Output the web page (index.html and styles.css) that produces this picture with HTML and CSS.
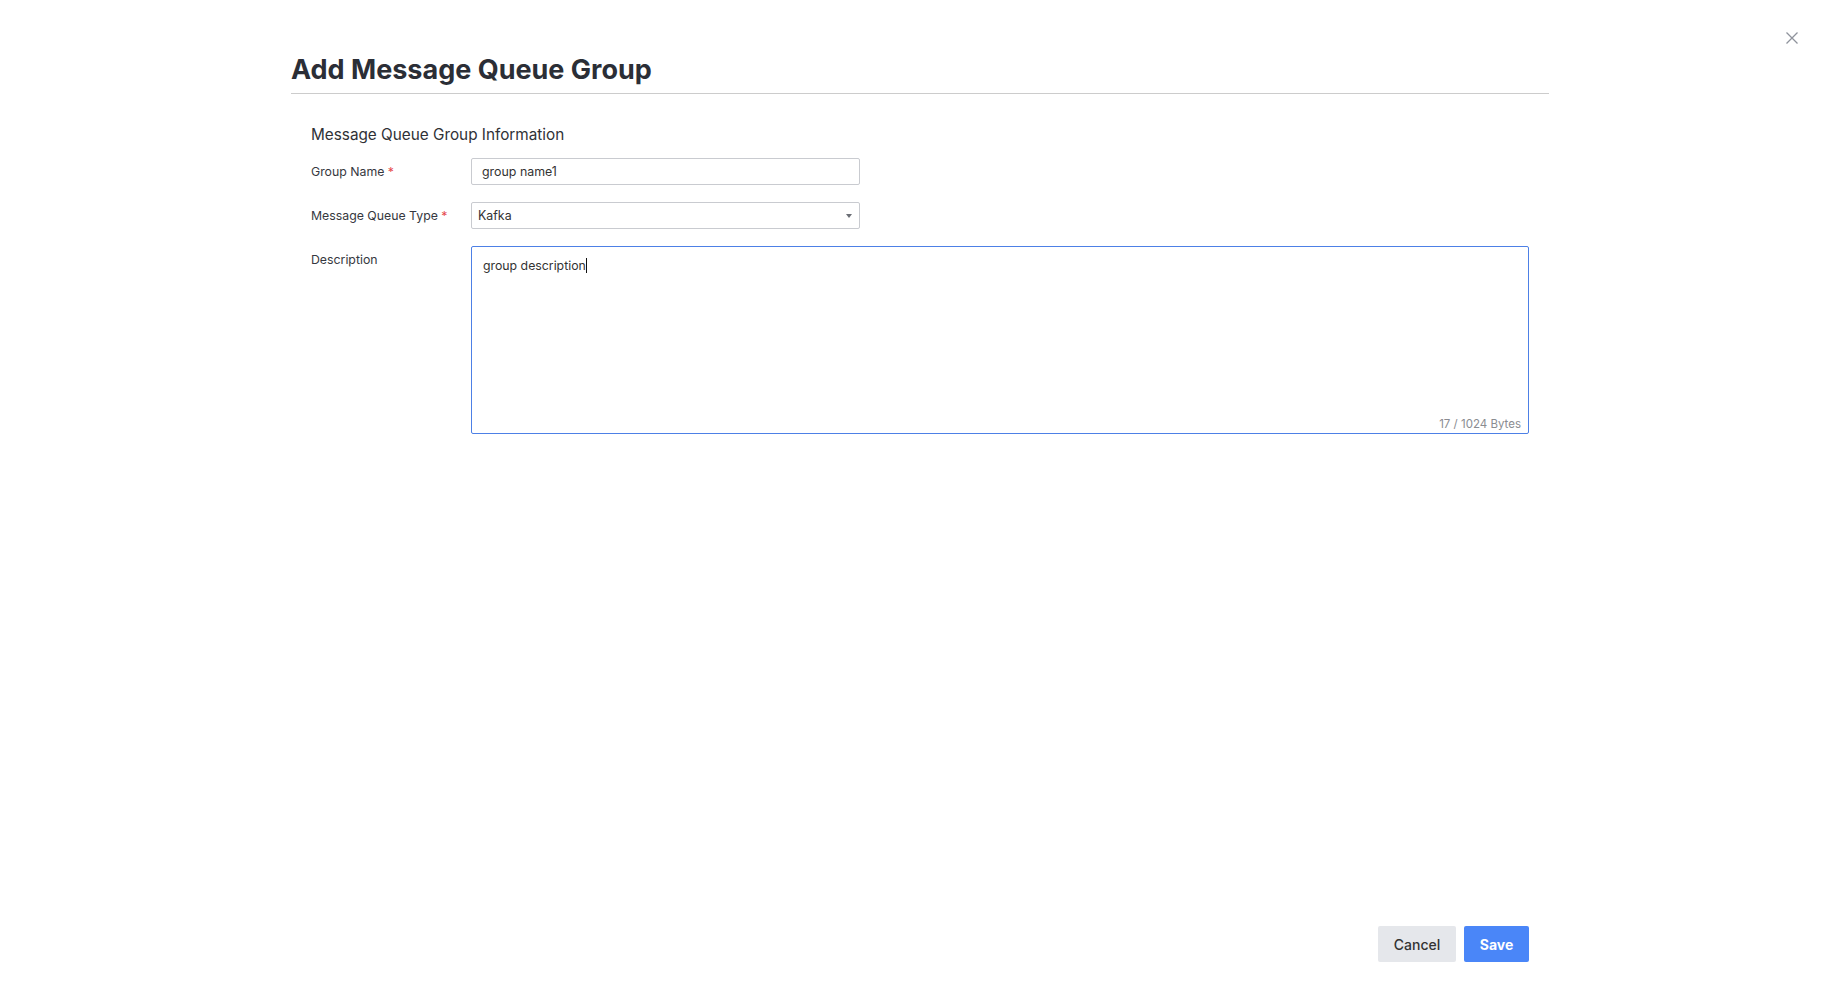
FILE: index.html
```html
<!DOCTYPE html>
<html lang="en">

<head>
    <meta charset="UTF-8">
    <meta name="viewport" content="width=device-width, initial-scale=1.0">
    <title>Add Message Queue Group</title>
    <link rel="stylesheet" href="styles.css">
</head>

<body>
    <button class="close-btn" aria-label="Close">
        <svg width="14" height="14" viewBox="0 0 14 14">
            <path d="M1.5 1.5 L12.5 12.5 M12.5 1.5 L1.5 12.5" stroke="#8f939c" stroke-width="1.3" fill="none" />
        </svg>
    </button>

    <div class="dialog">
        <h1 class="dialog-title">Add Message Queue Group</h1>

        <div class="form">
            <h3 class="section-title">Message Queue Group Information</h3>

            <div class="form-row">
                <label class="form-label">Group Name <span class="required">*</span></label>
                <div class="field">
                    <div class="input">group name1</div>
                </div>
            </div>

            <div class="form-row">
                <label class="form-label">Message Queue Type <span class="required">*</span></label>
                <div class="field">
                    <div class="select">
                        <span>Kafka</span>
                        <span class="select-arrow"></span>
                    </div>
                </div>
            </div>

            <div class="form-row">
                <label class="form-label">Description</label>
                <div class="field field-wide">
                    <div class="textarea">group description<span class="caret"></span></div>
                    <span class="counter">17 / 1024 Bytes</span>
                </div>
            </div>
        </div>

        <div class="footer">
            <button class="btn btn-cancel">Cancel</button>
            <button class="btn btn-save">Save</button>
        </div>
    </div>
</body>

</html>
```

FILE: styles.css
```css
* {
    box-sizing: border-box;
}

body {
    font-family: Inter, 'Noto Sans', sans-serif;
    background-color: #fff;
    margin: 0;
    color: #333;
    font-size: 12.4px;
}

.close-btn {
    position: absolute;
    top: 31px;
    right: 41px;
    width: 14px;
    height: 14px;
    padding: 0;
    border: none;
    background: none;
    cursor: pointer;
}

.close-btn svg {
    display: block;
}

.dialog {
    width: 1258px;
    margin: 0 auto;
    height: 100vh;
    display: flex;
    flex-direction: column;
    padding-bottom: 39px;
}

.dialog-title {
    margin: 54px 0 0;
    padding-bottom: 7px;
    font-size: 27px;
    line-height: 32px;
    font-weight: 700;
    color: #2b2e36;
    border-bottom: 1px solid #cccccc;
}

.form {
    padding: 31px 20px 0;
}

.section-title {
    margin: 0 0 13px;
    font-size: 15.3px;
    line-height: 20px;
    font-weight: 400;
    color: #2f3136;
}

.form-row {
    display: flex;
    margin-bottom: 17px;
}

.form-label {
    width: 160px;
    flex-shrink: 0;
    line-height: 27px;
    font-size: 12.3px;
    color: #363840;
}

.required {
    color: #e5484d;
}

.field {
    width: 389px;
    position: relative;
}

.field-wide {
    flex: 1;
    width: auto;
}

.input,
.select {
    height: 27px;
    border: 1px solid #c9cbd0;
    border-radius: 2px;
    line-height: 25px;
    color: #333;
}

.input {
    padding: 0 10px;
}

.select {
    display: flex;
    align-items: center;
    justify-content: space-between;
    padding: 0 7px 0 6px;
}

.select-arrow {
    width: 0;
    height: 0;
    border-left: 3.5px solid transparent;
    border-right: 3.5px solid transparent;
    border-top: 4px solid #6b6e75;
    margin-top: 1px;
}

.textarea {
    height: 188px;
    border: 1px solid #4d80e6;
    border-radius: 2px;
    padding: 10px 11px;
    line-height: 18px;
    font-size: 12.3px;
    color: #333;
}

.caret {
    display: inline-block;
    width: 1px;
    height: 15px;
    background-color: #111;
    vertical-align: -3px;
}

.counter {
    position: absolute;
    right: 8px;
    bottom: 3px;
    font-size: 11.5px;
    line-height: 14px;
    color: #8a8c91;
}

.footer {
    margin-top: auto;
    display: flex;
    justify-content: flex-end;
    gap: 8px;
    padding-right: 20px;
}

.btn {
    height: 36px;
    border: none;
    border-radius: 2px;
    font-family: Inter, 'Noto Sans', sans-serif;
    font-size: 14px;
    cursor: pointer;
}

.btn-cancel {
    width: 78px;
    background-color: #e5e7eb;
    color: #333;
    font-weight: 500;
}

.btn-save {
    width: 65px;
    background-color: #4a86f8;
    color: #fff;
    font-weight: 700;
}
```
